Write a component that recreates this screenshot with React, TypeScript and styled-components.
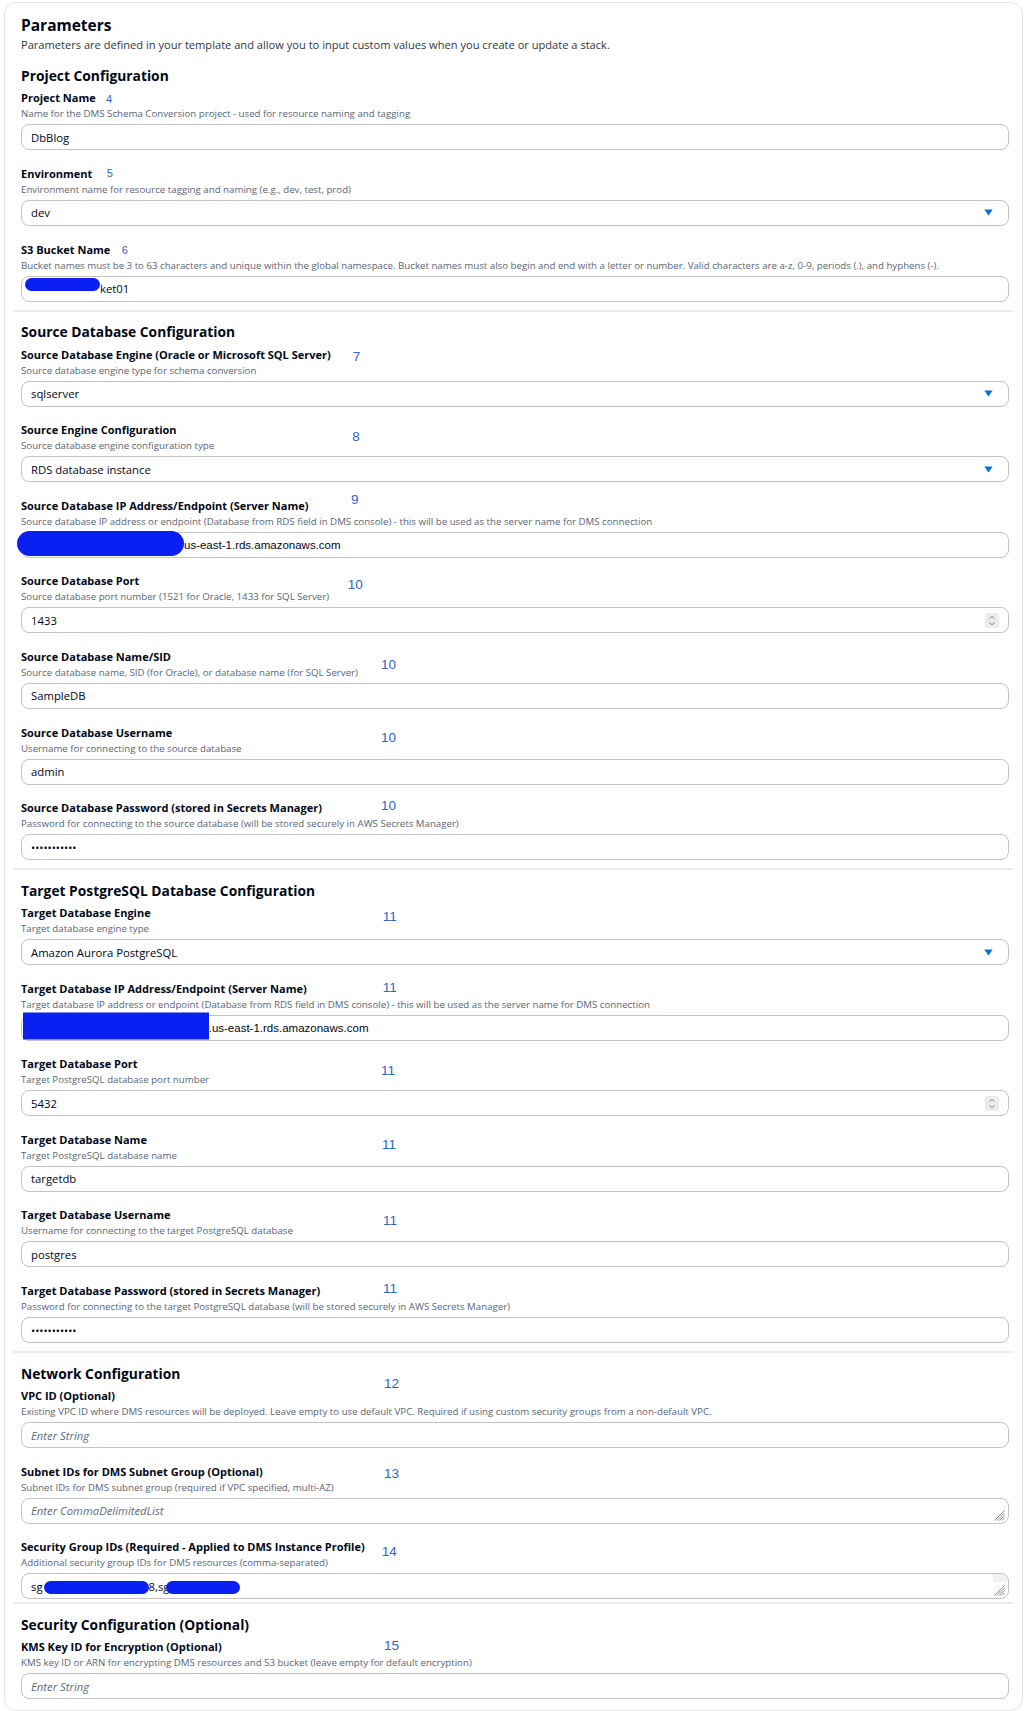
import React, { FC, ReactNode } from "react";
import styled, { createGlobalStyle } from "styled-components";

type Kind = "text" | "select" | "number" | "textarea"

type Note = { n: string, x: number, y: number, small?: boolean }

type FieldDef = {
    label: string,
    desc: string,
    kind: Kind,
    value?: ReactNode,
    placeholder?: string,
    note: Note,
    scrollStub?: boolean,
}

type SectionDef = {
    title: string,
    padBottom?: number,
    fields: FieldDef[],
}

const GlobalStyle = createGlobalStyle`
    html, body {
        margin: 0;
        padding: 0;
        background: #ffffff;
    }
    body {
        font-family: "Open Sans", "Noto Sans", Arial, sans-serif;
        color: #000716;
    }
    * {
        box-sizing: border-box;
    }
`

const Card = styled.div`
    margin: 2px 3px 0 4px;
    border: 1px solid #e3e5e8;
    border-radius: 12px;
    padding: 14px 8px 0 8px;
`

const Header = styled.div`
    padding: 0 5px 0 8px;
    margin-bottom: 16px;
`

const Title = styled.h1`
    margin: 0;
    font-size: 15.5px;
    line-height: 17px;
    font-weight: 700;
`

const Subtitle = styled.p`
    margin: 4px 0 0;
    font-size: 11.1px;
    line-height: 13px;
    color: #2f3742;
`

const Section = styled.section<{ $padBottom?: number }>`
    padding: 0 5px ${p => p.$padBottom ?? 8}px 8px;

    & + & {
        border-top: 2px solid #e9ebed;
        padding-top: 11.6px;
    }
`

const SectionTitle = styled.h2`
    margin: 0 0 8.4px;
    font-size: 13.8px;
    line-height: 17px;
    font-weight: 700;
`

const Fields = styled.div`
    display: flex;
    flex-direction: column;
    gap: 17.6px;
`

const FieldBox = styled.div`
    position: relative;
`

const Label = styled.div`
    font-size: 11px;
    line-height: 12px;
    font-weight: 700;
`

const Desc = styled.div`
    font-size: 9.7px;
    line-height: 12px;
    color: #5a6575;
    margin: 4px 0 4px;
    white-space: nowrap;
`

const NoteNum = styled.span<{ $x: number, $y: number, $small?: boolean }>`
    position: absolute;
    left: ${p => p.$x}px;
    top: ${p => p.$y}px;
    font-family: "Liberation Sans", Arial, sans-serif;
    font-size: ${p => p.$small ? 11 : 13.5}px;
    line-height: ${p => p.$small ? 12 : 14}px;
    color: #2c64c8;
`

const InputBox = styled.div<{ $kind: Kind }>`
    position: relative;
    display: flex;
    align-items: center;
    height: 26px;
    border: 1px solid #c3c3c6;
    border-radius: 8px;
    padding: 0 ${p => p.$kind === "number" ? 9 : 10}px 0 9px;
    font-size: 11.3px;
    white-space: nowrap;
`

const Placeholder = styled.span`
    font-style: italic;
    color: #5f6b7a;
`

const Endpoint = styled.span`
    font-family: "Liberation Sans", Arial, sans-serif;
    font-size: 11.5px;
`

const Dots = styled.span`
    font-size: 11px;
`

const Redact = styled.span<{ $w: number, $h: number, $ml: number, $round?: boolean, $dy?: number }>`
    flex-shrink: 0;
    display: inline-block;
    width: ${p => p.$w}px;
    height: ${p => p.$h}px;
    margin-left: ${p => p.$ml}px;
    border-radius: ${p => p.$round ? p.$h / 2 : 0}px;
    background: #0a1ff2;
    transform: translateY(${p => p.$dy ?? 0}px);
`

const CaretBox = styled.svg`
    margin-left: auto;
    margin-right: 5px;
    flex-shrink: 0;
`

const SpinnerBox = styled.div`
    margin-left: auto;
    width: 14px;
    height: 15px;
    border-radius: 2px;
    background: #ececf0;
    display: flex;
    align-items: center;
    justify-content: center;
`

const GripBox = styled.svg`
    position: absolute;
    right: 3px;
    bottom: 2px;
`

const ScrollStub = styled.div`
    position: absolute;
    right: 1px;
    top: 0;
    width: 14px;
    height: 8px;
    background: #f2f2f3;
    border-radius: 0 7px 0 0;
`

const Caret = () => (
    <CaretBox width="9" height="7" viewBox="0 0 9 7">
        <path d="M0.3 0.5h8.4L4.5 6.6z" fill="#0972d3" />
    </CaretBox>
)

const Spinner = () => (
    <SpinnerBox>
        <svg width="14" height="15" viewBox="0 0 14 15">
            <path d="M4.6 5.6 7 3.2l2.4 2.4M4.6 9.4 7 11.8l2.4-2.4" stroke="#707076" strokeWidth="0.9" fill="none" />
        </svg>
    </SpinnerBox>
)

const Grip = () => (
    <GripBox width="11" height="11" viewBox="0 0 11 11">
        <path d="M10.5 0.5 0.5 10.5M10.5 3 3 10.5M10.5 5.5 5.5 10.5M10.5 8 8 10.5" stroke="#6f6f73" strokeWidth="0.8" fill="none" />
    </GripBox>
)

const password = "•••••••••••"

const sections: SectionDef[] = [
    {
        title: "Project Configuration",
        fields: [
            { label: "Project Name", desc: "Name for the DMS Schema Conversion project - used for resource naming and tagging", kind: "text", value: "DbBlog", note: { n: "4", x: 85, y: 1.1, small: true } },
            { label: "Environment", desc: "Environment name for resource tagging and naming (e.g., dev, test, prod)", kind: "select", value: "dev", note: { n: "5", x: 85.7, y: -1.1, small: true } },
            {
                label: "S3 Bucket Name",
                desc: "Bucket names must be 3 to 63 characters and unique within the global namespace. Bucket names must also begin and end with a letter or number. Valid characters are a-z, 0-9, periods (.), and hyphens (-).",
                kind: "text",
                value: <><Redact $w={75} $h={13.7} $ml={-6} $round $dy={-4} /><span>ket01</span></>,
                note: { n: "6", x: 100.7, y: 0.9, small: true },
            },
        ],
    },
    {
        title: "Source Database Configuration",
        fields: [
            { label: "Source Database Engine (Oracle or Microsoft SQL Server)", desc: "Source database engine type for schema conversion", kind: "select", value: "sqlserver", note: { n: "7", x: 331.7, y: 1.2 } },
            { label: "Source Engine Configuration", desc: "Source database engine configuration type", kind: "select", value: "RDS database instance", note: { n: "8", x: 331.3, y: 5.5 } },
            {
                label: "Source Database IP Address/Endpoint (Server Name)",
                desc: "Source database IP address or endpoint (Database from RDS field in DMS console) - this will be used as the server name for DMS connection",
                kind: "text",
                value: <><Redact $w={167.3} $h={25} $ml={-14.3} $round $dy={-1} /><Endpoint>us-east-1.rds.amazonaws.com</Endpoint></>,
                note: { n: "9", x: 330, y: -7.2 },
            },
            { label: "Source Database Port", desc: "Source database port number (1521 for Oracle, 1433 for SQL Server)", kind: "number", value: "1433", note: { n: "10", x: 326.7, y: 2.8 } },
            { label: "Source Database Name/SID", desc: "Source database name, SID (for Oracle), or database name (for SQL Server)", kind: "text", value: "SampleDB", note: { n: "10", x: 360, y: 7.5 } },
            { label: "Source Database Username", desc: "Username for connecting to the source database", kind: "text", value: "admin", note: { n: "10", x: 360, y: 4.8 } },
            { label: "Source Database Password (stored in Secrets Manager)", desc: "Password for connecting to the source database (will be stored securely in AWS Secrets Manager)", kind: "text", value: <Dots>{password}</Dots>, note: { n: "10", x: 360, y: -3.5 } },
        ],
    },
    {
        title: "Target PostgreSQL Database Configuration",
        fields: [
            { label: "Target Database Engine", desc: "Target database engine type", kind: "select", value: "Amazon Aurora PostgreSQL", note: { n: "11", x: 361.7, y: 2.7 } },
            {
                label: "Target Database IP Address/Endpoint (Server Name)",
                desc: "Target database IP address or endpoint (Database from RDS field in DMS console) - this will be used as the server name for DMS connection",
                kind: "text",
                value: <><Redact $w={185.7} $h={27} $ml={-8} $dy={-1.5} /><Endpoint>.us-east-1.rds.amazonaws.com</Endpoint></>,
                note: { n: "11", x: 361.7, y: -1.5 },
            },
            { label: "Target Database Port", desc: "Target PostgreSQL database port number", kind: "number", value: "5432", note: { n: "11", x: 360, y: 5.9 } },
            { label: "Target Database Name", desc: "Target PostgreSQL database name", kind: "text", value: "targetdb", note: { n: "11", x: 361, y: 3.8 } },
            { label: "Target Database Username", desc: "Username for connecting to the target PostgreSQL database", kind: "text", value: "postgres", note: { n: "11", x: 362, y: 4.8 } },
            { label: "Target Database Password (stored in Secrets Manager)", desc: "Password for connecting to the target PostgreSQL database (will be stored securely in AWS Secrets Manager)", kind: "text", value: <Dots>{password}</Dots>, note: { n: "11", x: 362, y: -2.9 } },
        ],
    },
    {
        title: "Network Configuration",
        padBottom: 3,
        fields: [
            { label: "VPC ID (Optional)", desc: "Existing VPC ID where DMS resources will be deployed. Leave empty to use default VPC. Required if using custom security groups from a non-default VPC.", kind: "text", placeholder: "Enter String", note: { n: "12", x: 363, y: -13 } },
            { label: "Subnet IDs for DMS Subnet Group (Optional)", desc: "Subnet IDs for DMS subnet group (required if VPC specified, multi-AZ)", kind: "textarea", placeholder: "Enter CommaDelimitedList", note: { n: "13", x: 363, y: 0.9 } },
            {
                label: "Security Group IDs (Required - Applied to DMS Instance Profile)",
                desc: "Additional security group IDs for DMS resources (comma-separated)",
                kind: "textarea",
                value: <><span>sg</span><Redact $w={105} $h={13} $ml={1} $round $dy={1} /><span>8,sg</span><Redact $w={74} $h={13} $ml={-3.7} $round $dy={1} /></>,
                note: { n: "14", x: 360.7, y: 3.7 },
                scrollStub: true,
            },
        ],
    },
    {
        title: "Security Configuration (Optional)",
        padBottom: 11,
        fields: [
            { label: "KMS Key ID for Encryption (Optional)", desc: "KMS key ID or ARN for encrypting DMS resources and S3 bucket (leave empty for default encryption)", kind: "text", placeholder: "Enter String", note: { n: "15", x: 363, y: -2.2 } },
        ],
    },
]

const Field: FC<FieldDef> = ({ label, desc, kind, value, placeholder, note, scrollStub }) => (
    <FieldBox>
        <Label>{label}</Label>
        <NoteNum $x={note.x} $y={note.y} $small={note.small}>{note.n}</NoteNum>
        <Desc>{desc}</Desc>
        <InputBox $kind={kind}>
            {value ?? <Placeholder>{placeholder}</Placeholder>}
            {kind === "select" && <Caret />}
            {kind === "number" && <Spinner />}
            {kind === "textarea" && <Grip />}
            {scrollStub && <ScrollStub />}
        </InputBox>
    </FieldBox>
)

const App = () => (
    <>
        <GlobalStyle />
        <Card>
            <Header>
                <Title>Parameters</Title>
                <Subtitle>Parameters are defined in your template and allow you to input custom values when you create or update a stack.</Subtitle>
            </Header>
            {sections.map(section => (
                <Section key={section.title} $padBottom={section.padBottom}>
                    <SectionTitle>{section.title}</SectionTitle>
                    <Fields>
                        {section.fields.map(field => <Field key={field.label} {...field} />)}
                    </Fields>
                </Section>
            ))}
        </Card>
    </>
)

export default App;
